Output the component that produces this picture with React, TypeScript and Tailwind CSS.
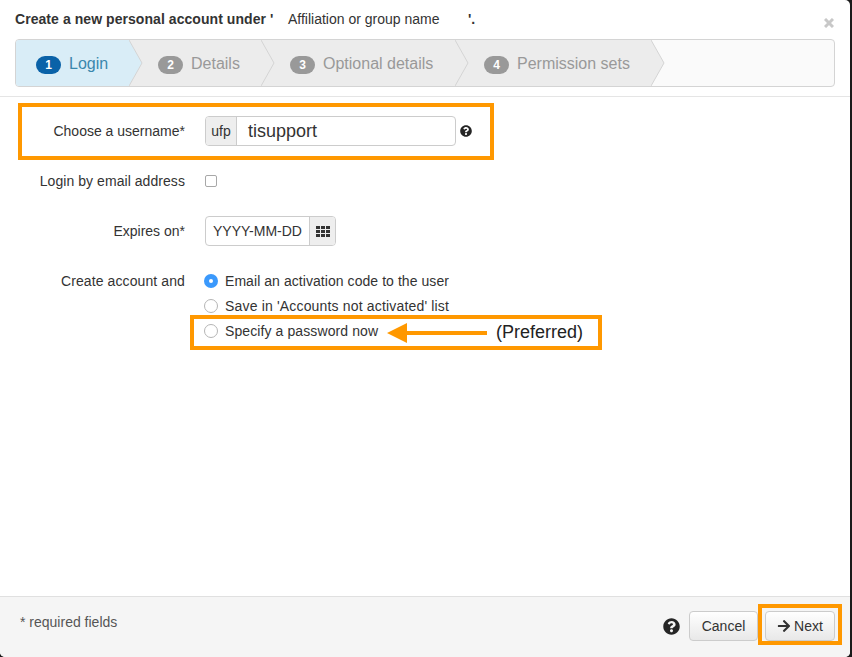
import { FaArrowRight, FaQuestionCircle } from "react-icons/fa";

const steps = [
  { n: 1, label: "Login", w: "w-[113px]", pl: "pl-[20px]", active: true },
  { n: 2, label: "Details", w: "w-[132px]", pl: "pl-[29px]", active: false },
  { n: 3, label: "Optional details", w: "w-[194px]", pl: "pl-[29px]", active: false },
  { n: 4, label: "Permission sets", w: "w-[196px]", pl: "pl-[29px]", active: false },
];

function Radio({ checked }: { checked?: boolean }) {
  if (checked) {
    return (
      <span className="w-[14px] h-[14px] rounded-full bg-[#3b99fc] flex items-center justify-center shrink-0">
        <span className="w-[4px] h-[4px] rounded-full bg-white" />
      </span>
    );
  }
  return <span className="w-[14px] h-[14px] rounded-full border border-[#b5b5b5] bg-white shrink-0" />;
}

export default function App() {
  return (
    <div className="w-[852px] h-[657px] bg-[#1a1a1a] overflow-hidden font-['Liberation_Sans',Arial,sans-serif] text-[14px] text-[#333]">
      <div className="w-[850px] h-[657px] bg-white rounded-b-[5px] rounded-tr-[5px] flex flex-col">
        {/* header */}
        <div className="h-[97px] border-b border-[#e5e5e5] px-[15px] shrink-0 relative">
          <div className="h-[39px] pt-[11px] leading-[16px] flex whitespace-pre">
            <span className="font-bold w-[273px] text-[#333] tracking-[0.06px]">Create a new personal account under '</span>
            <span className="w-[180px]">Affiliation or group name</span>
            <span className="font-bold">'.</span>
          </div>
          <svg width="10" height="10" viewBox="0 0 10 10" className="absolute left-[824px] top-[18px]">
            <path d="M1 1 L9 9 M9 1 L1 9" stroke="#c8c8c8" strokeWidth="3" />
          </svg>
          <div className="h-[48px] w-[820px] border border-[#d4d4d4] rounded-[4px] bg-[#fafafa] flex overflow-hidden">
            {steps.map((s, i) => (
              <div
                key={s.n}
                className={`${s.w} ${s.pl} relative flex items-center gap-[8px] text-[16px] ${i === 0 ? "z-40" : i === 1 ? "z-30" : i === 2 ? "z-20" : "z-10"} ${s.active ? "bg-[#d9edf7] text-[#3a87ad]" : "bg-[#ececec] text-[#999]"}`}
              >
                <span className={`mt-[3px] w-[25px] h-[18px] rounded-[9px] text-white text-[12px] font-bold flex items-center justify-center ${s.active ? "bg-[#0a62a8]" : "bg-[#999]"}`}>
                  {s.n}
                </span>
                <span className="pt-[2px]">{s.label}</span>
                <svg width="14" height="46" viewBox="0 0 14 46" className="absolute top-0 left-full">
                  <path d="M0 0 L13 23 L0 46 Z" fill={s.active ? "#d9edf7" : "#ececec"} />
                  <path d="M0 0 L13 23 L0 46" fill="none" stroke="#d4d4d4" />
                </svg>
              </div>
            ))}
          </div>
        </div>

        {/* form */}
        <div className="flex-1 relative">
          <div className="mt-[6px] ml-[18px] w-[476px] h-[57px] border-4 border-[#ff9800] pb-[2px] flex items-center">
            <label className="w-[163px] text-right shrink-0 pt-[2px]">Choose a username*</label>
            <div className="ml-[20px] w-[251px] h-[30px] border border-[#ccc] rounded-[4px] flex overflow-hidden">
              <span className="w-[31px] bg-[#eee] border-r border-[#ccc] pt-[2px] flex items-center justify-center">ufp</span>
              <span className="pl-[11px] text-[18px] pt-[2px] flex items-center text-[#333]">tisupport</span>
            </div>
            <span className="ml-[4px]"><FaQuestionCircle size={12} className="text-[#262626]" /></span>
          </div>

          <div className="mt-[14px] flex items-center h-[14px]">
            <label className="w-[185px] text-right shrink-0 tracking-[0.06px]">Login by email address</label>
            <span className="ml-[20px] w-[12px] h-[12px] border border-[#a8a8a8] rounded-[2px] bg-white" />
          </div>

          <div className="mt-[28px] flex items-center h-[30px]">
            <label className="w-[185px] text-right shrink-0">Expires on*</label>
            <div className="ml-[20px] w-[131px] h-[30px] border border-[#ccc] rounded-[4px] flex overflow-hidden">
              <span className="w-[103px] pl-[7px] flex items-center whitespace-nowrap">YYYY-MM-DD</span>
              <span className="flex-1 bg-[#eee] border-l border-[#ccc] flex items-center justify-center">
                <svg width="14" height="11" viewBox="0 0 14 11" fill="#333">
                  <rect x="0" y="0" width="4" height="3" />
                  <rect x="5" y="0" width="4" height="3" />
                  <rect x="10" y="0" width="4" height="3" />
                  <rect x="0" y="4" width="4" height="3" />
                  <rect x="5" y="4" width="4" height="3" />
                  <rect x="10" y="4" width="4" height="3" />
                  <rect x="0" y="8" width="4" height="3" />
                  <rect x="5" y="8" width="4" height="3" />
                  <rect x="10" y="8" width="4" height="3" />
                </svg>
              </span>
            </div>
          </div>

          <div className="mt-[25px] flex tracking-[0.06px]">
            <label className="w-[185px] text-right shrink-0 leading-[20px] tracking-[0.1px]">Create account and</label>
            <div className="ml-[19px] flex flex-col gap-[5px]">
              <div className="flex items-center h-[20px] gap-[7px]"><Radio checked />Email an activation code to the user</div>
              <div className="flex items-center h-[20px] gap-[7px] tracking-[0.17px]"><Radio />Save in 'Accounts not activated' list</div>
              <div className="flex items-center h-[20px] gap-[7px] tracking-[0.1px]"><Radio />Specify a password now</div>
            </div>
          </div>

          {/* annotation */}
          <div className="absolute left-[190px] top-[218px] w-[412px] h-[35px] border-4 border-[#ff9800] flex items-center">
            <svg width="100" height="20" viewBox="0 0 100 20" className="absolute left-[193px] top-[4px]">
              <path d="M0 10 L20 0 L20 8 L100 8 L100 12 L20 12 L20 20 Z" fill="#ff9800" />
            </svg>
            <span className="absolute left-[302px] top-[2px] text-[18px] leading-[22px] text-[#222]">(Preferred)</span>
          </div>
        </div>

        {/* footer */}
        <div className="h-[61px] bg-[#f5f5f5] border-t border-[#e0e0e0] shrink-0 flex items-start relative rounded-b-[5px]">
          <span className="ml-[20px] mt-[16px] leading-[18px] text-[#555]">* required fields</span>
          <div className="ml-auto mt-[14px] mr-[15px] flex items-center">
            <FaQuestionCircle size={17} className="text-[#262626]" />
            <button className="ml-[9px] w-[69px] h-[30px] border border-[#ccc] rounded-[4px] bg-gradient-to-b from-white to-[#e8e8e8] text-[#333]">Cancel</button>
            <button className="ml-[7px] w-[70px] h-[30px] border border-[#ccc] rounded-[4px] bg-gradient-to-b from-white to-[#e8e8e8] text-[#333] flex items-center justify-center gap-[3px]">
              <FaArrowRight size={14} />
              Next
            </button>
          </div>
          <div className="absolute left-[758px] top-[7px] w-[84px] h-[41px] border-4 border-[#ff9800]" />
        </div>
      </div>
    </div>
  );
}
